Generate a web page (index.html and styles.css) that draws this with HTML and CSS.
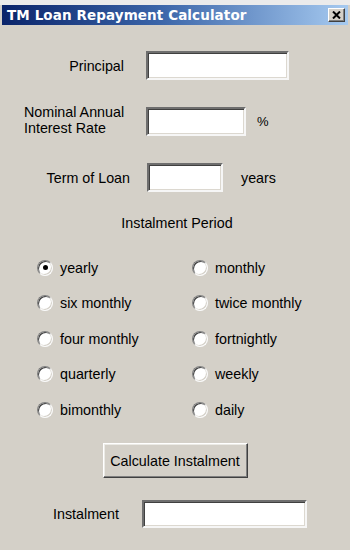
FILE: index.html
```html
<!DOCTYPE html>
<html>
<head>
<meta charset="utf-8">
<title>TM Loan Repayment Calculator</title>
<link rel="stylesheet" href="styles.css">
</head>
<body>
<div class="window">
  <div class="topstrip"></div>
  <div class="titlebar">
    <span class="title">TM Loan Repayment Calculator</span>
    <span class="close">
      <svg width="9" height="8" viewBox="0 0 9 8"><path d="M1 0.5 L8 7.5 M8 0.5 L1 7.5" stroke="#000" stroke-width="2"/></svg>
    </span>
  </div>
  <div class="form">
    <div class="row r1">
      <span class="label">Principal</span>
      <input class="field" type="text">
    </div>
    <div class="row r2">
      <span class="label">Nominal Annual<br>Interest Rate</span>
      <input class="field" type="text">
      <span class="unit">%</span>
    </div>
    <div class="row r3">
      <span class="label">Term of Loan</span>
      <input class="field" type="text">
      <span class="unit">years</span>
    </div>
    <div class="heading">Instalment Period</div>
    <div class="radios">
      <div class="opt"><span class="radio on"></span><span>yearly</span></div>
      <div class="opt"><span class="radio"></span><span>monthly</span></div>
      <div class="opt"><span class="radio"></span><span>six monthly</span></div>
      <div class="opt"><span class="radio"></span><span>twice monthly</span></div>
      <div class="opt"><span class="radio"></span><span>four monthly</span></div>
      <div class="opt"><span class="radio"></span><span>fortnightly</span></div>
      <div class="opt"><span class="radio"></span><span>quarterly</span></div>
      <div class="opt"><span class="radio"></span><span>weekly</span></div>
      <div class="opt"><span class="radio"></span><span>bimonthly</span></div>
      <div class="opt"><span class="radio"></span><span>daily</span></div>
    </div>
    <div class="btn-row"><button class="btn" type="button">Calculate Instalment</button></div>
    <div class="row r5">
      <span class="label">Instalment</span>
      <input class="field" type="text">
    </div>
  </div>
</div>
</body>
</html>
```
FILE: styles.css
```css
* { box-sizing: border-box; }
html, body { margin: 0; padding: 0; }
body {
  width: 350px;
  height: 550px;
  overflow: hidden;
  background: #d4d0c8;
  font-family: "Liberation Sans", Arial, sans-serif;
  font-size: 14.3px;
  color: #000;
}
.window { width: 350px; height: 550px; }
.topstrip { height: 5px; background: #ebebeb; }
.titlebar {
  height: 20px;
  margin: 0 2px;
  background: linear-gradient(to right, #0a246a 0%, #3a64a8 45%, #a6caf0 100%);
  display: flex;
  align-items: center;
  justify-content: space-between;
  padding: 0 3px 0 5px;
}
.title {
  color: #fff;
  font-family: "DejaVu Sans", Verdana, sans-serif;
  font-weight: bold;
  font-size: 13.5px;
  letter-spacing: 0.1px;
}
.close {
  width: 17px;
  height: 14px;
  background: #d4d0c8;
  border: 1px solid;
  border-color: #fff #404040 #404040 #fff;
  box-shadow: inset -1px -1px 0 #808080;
  display: flex;
  align-items: center;
  justify-content: center;
}
.close svg { display: block; }
.form { display: flex; flex-direction: column; }
.row { display: flex; align-items: center; }
.field {
  display: block;
  margin: 0;
  padding: 0 3px;
  font: inherit;
  background: #fff;
  border: 2px solid;
  border-color: #6e6e6e #f6f6f6 #f6f6f6 #6e6e6e;
  box-shadow: inset 1px 1px 0 #404040, inset -1px -1px 0 #dcd8d0;
  outline: none;
}
.r1 { margin-top: 26px; height: 29px; }
.r1 .label { width: 124px; text-align: right; margin-right: 22px; }
.r1 .field { width: 143px; height: 29px; }
.r2 { margin-top: 27px; height: 29px; padding-left: 24px; }
.r2 .label { width: 122px; line-height: 16px; align-self: flex-start; margin-top: -3px; }
.r2 .field { width: 100px; height: 29px; }
.r2 .unit { margin-left: 11px; font-size: 13px; }
.r3 { margin-top: 27px; height: 29px; }
.r3 .label { width: 130px; text-align: right; margin-right: 17px; }
.r3 .field { width: 76px; height: 29px; }
.r3 .unit { margin-left: 18px; }
.heading {
  margin-top: 23px;
  height: 16px;
  line-height: 16px;
  text-align: center;
  padding-left: 4px;
}
.radios {
  margin-top: 19px;
  padding-left: 37px;
  display: grid;
  grid-template-columns: 155px 1fr;
  grid-auto-rows: 35.5px;
}
.opt { display: flex; align-items: center; gap: 7px; }
.radio {
  width: 16px;
  height: 16px;
  flex: none;
  border-radius: 50%;
  background: #fff;
  border: 1px solid;
  border-color: #808080 #fafafa #fafafa #808080;
  box-shadow: inset 1px 1px 0 #404040, inset -1px -1px 0 #d4d0c8;
  display: flex;
  align-items: center;
  justify-content: center;
}
.radio.on::after {
  content: "";
  width: 5px;
  height: 5px;
  border-radius: 50%;
  background: #000;
}
.btn-row { margin-top: 15.5px; display: flex; justify-content: center; }
.btn {
  width: 145px;
  height: 35px;
  margin: 0;
  padding: 0;
  font: inherit;
  color: #000;
  background: #d4d0c8;
  border: 1px solid;
  border-color: #fff #404040 #404040 #fff;
  box-shadow: inset -1px -1px 0 #808080, inset 1px 1px 0 #ecebe6;
}
.r5 { margin-top: 22px; height: 28px; }
.r5 .label { width: 119px; text-align: right; margin-right: 23px; }
.r5 .field { width: 165px; height: 28px; }
```
